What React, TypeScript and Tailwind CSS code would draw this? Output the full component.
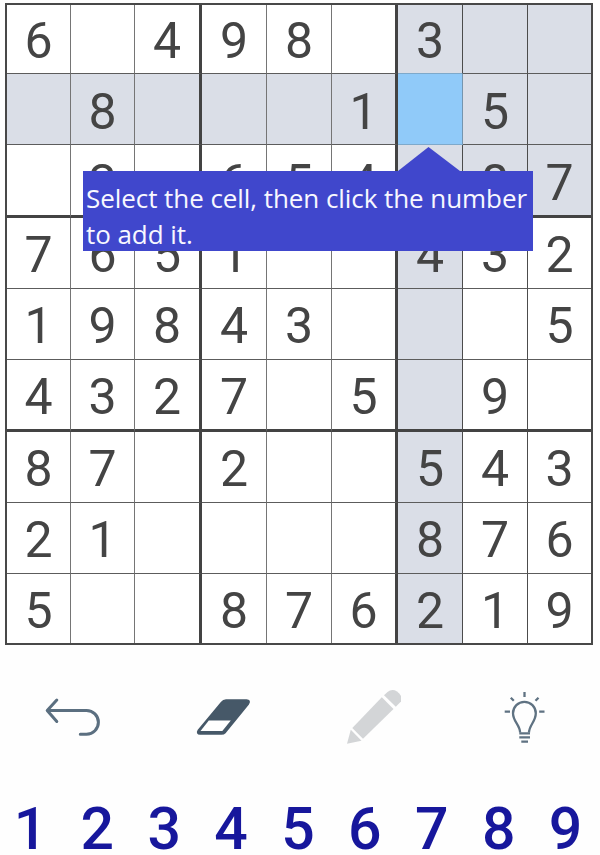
const ROWS = [
  '6.498.3..',
  '.8...1.5.',
  '.2.654.87',
  '7651..432',
  '19843...5',
  '4327.5.9.',
  '87.2..543',
  '21....876',
  '5..876219',
];

const SELECTED_ROW = 1;
const SELECTED_COL = 6;

function isHighlighted(row: number, col: number) {
  return row === SELECTED_ROW || col === SELECTED_COL || (row < 3 && col > 5);
}

function Cell({ value, row, col }: { value: string; row: number; col: number }) {
  const selected = row === SELECTED_ROW && col === SELECTED_COL;
  const background = selected ? 'bg-[#90caf9]' : isHighlighted(row, col) ? 'bg-[#dadee7]' : 'bg-white';
  const top = row === 0 ? 'pt-[11px]' : row < 3 ? 'pt-[13px]' : 'pt-3';
  const right =
    col === 8
      ? ''
      : col % 3 === 2
        ? 'border-r-3 border-r-[#434343]'
        : selected
          ? 'border-r border-r-[#7595ae]'
          : col > 5
            ? 'border-r border-r-[#4c4c4c]'
            : 'border-r border-r-[#757575]';
  const bottom =
    row === 8
      ? ''
      : row % 3 === 2
        ? 'border-b-3 border-b-[#434343]'
        : selected || (row === SELECTED_ROW - 1 && col === SELECTED_COL)
          ? 'border-b border-b-[#7ea9cb]'
          : 'border-b border-b-[#5c5c5c]';
  return (
    <div
      className={`flex justify-center text-[50px] leading-[50px] text-[#444444] ${top} ${background} ${right} ${bottom}`}
    >
      {value === '.' ? '' : value}
    </div>
  );
}

function Tooltip() {
  return (
    <div className="absolute top-[142px] left-[76px] w-[450px]">
      <svg className="ml-[315px] block h-[24px] w-[62px]" viewBox="0 0 62 24">
        <path d="M0 24 L30.5 0 L62 24Z" fill="#4047cc" />
      </svg>
      <div className="h-[80px] bg-[#4047cc] pt-[9px] pl-[3px] font-['Open_Sans','Noto_Sans',sans-serif] text-[26px] leading-[36px] tracking-[-0.06px] whitespace-nowrap text-[#f8f8ff]">
        Select the cell, then click the number
        <br />
        to add it.
      </div>
    </div>
  );
}

function Board() {
  return (
    <div className="relative mt-[3px] ml-[5px] grid w-[588px] grid-cols-[64px_64px_67px_65px_65px_66px_65px_65px_63px] grid-rows-[69px_71px_73px_71px_71px_72px_71px_71px_69px] border-2 border-[#484848]">
      {ROWS.map((cells, row) =>
        cells.split('').map((value, col) => <Cell key={`${row}-${col}`} value={value} row={row} col={col} />),
      )}
      <Tooltip />
    </div>
  );
}

function Toolbar() {
  return (
    <div className="mt-[43px] flex h-[58px] pl-[44px]">
      <svg className="h-[58px] w-[58px]" viewBox="44 688 58 58" fill="none" stroke="#5b6f80" strokeWidth="3" strokeLinecap="round" strokeLinejoin="round">
        <path d="M56.8 700 L47.2 710.4 L56.8 721.5 M47.5 710.4 H86.5 A11.8 11.8 0 0 1 86.5 734.2 H80.3" />
      </svg>
      <svg className="ml-[92px] h-[58px] w-[58px]" viewBox="194 688 58 58">
        <path
          d="M226 700.5 H246.5 Q250 700.5 248 703.7 L225 732 Q223.5 733.5 221.5 733.5 H200 Q197 733.5 198.7 730.5 L222 702.5 Q223.5 700.5 226 700.5Z"
          fill="#465868"
          stroke="#465868"
          strokeWidth="2.5"
          strokeLinejoin="round"
        />
        <path d="M208.8 720.5 H230.8 L222.3 731 H200.5Z" fill="#fff" />
      </svg>
      <svg className="ml-[92px] h-[58px] w-[58px]" viewBox="344 688 58 58" fill="#d3d5d7">
        <path d="M350.8 729.8 L361.5 740.8 L347 743.8Z" />
        <path d="M352.3 728 L381.8 697.3 L393.5 709 L363 738.7Z" />
        <path d="M384 695.2 L387.5 692 Q392 688.5 397 691.5 Q399.5 693 401 696 V701.5 L395.8 706.8Z" />
      </svg>
      <svg className="ml-[100px] h-[58px] w-[46px]" viewBox="502 688 46 58" fill="none" stroke="#5f7282" strokeWidth="2.3">
        <path d="M520.1 732.5 C520 725 513 721.5 513 713.2 A11.4 11.4 0 0 1 535.8 713.2 C535.8 721.5 529.2 725 529 732.5" />
        <path d="M519.3 733.4 H530 M519.3 737.4 H530 M521.3 741.7 H528 M524.5 692 V697 M510.8 697.7 L513.8 700.7 M538.5 697.7 L535.5 700.7 M504.7 711.7 H510 M539.2 711.7 H544.5" />
      </svg>
    </div>
  );
}

function NumberPad() {
  return (
    <div className="mt-[58px] -ml-[3px] grid w-[602px] grid-cols-9 text-center text-[59px] leading-[49px] font-medium text-[#17179c]">
      {[1, 2, 3, 4, 5, 6, 7, 8, 9].map((n) => (
        <div key={n}>{n}</div>
      ))}
    </div>
  );
}

export default function App() {
  return (
    <main className="flex h-[855px] w-[600px] flex-col overflow-hidden bg-[#fefefe] font-['Roboto',sans-serif]">
      <Board />
      <Toolbar />
      <NumberPad />
    </main>
  );
}
